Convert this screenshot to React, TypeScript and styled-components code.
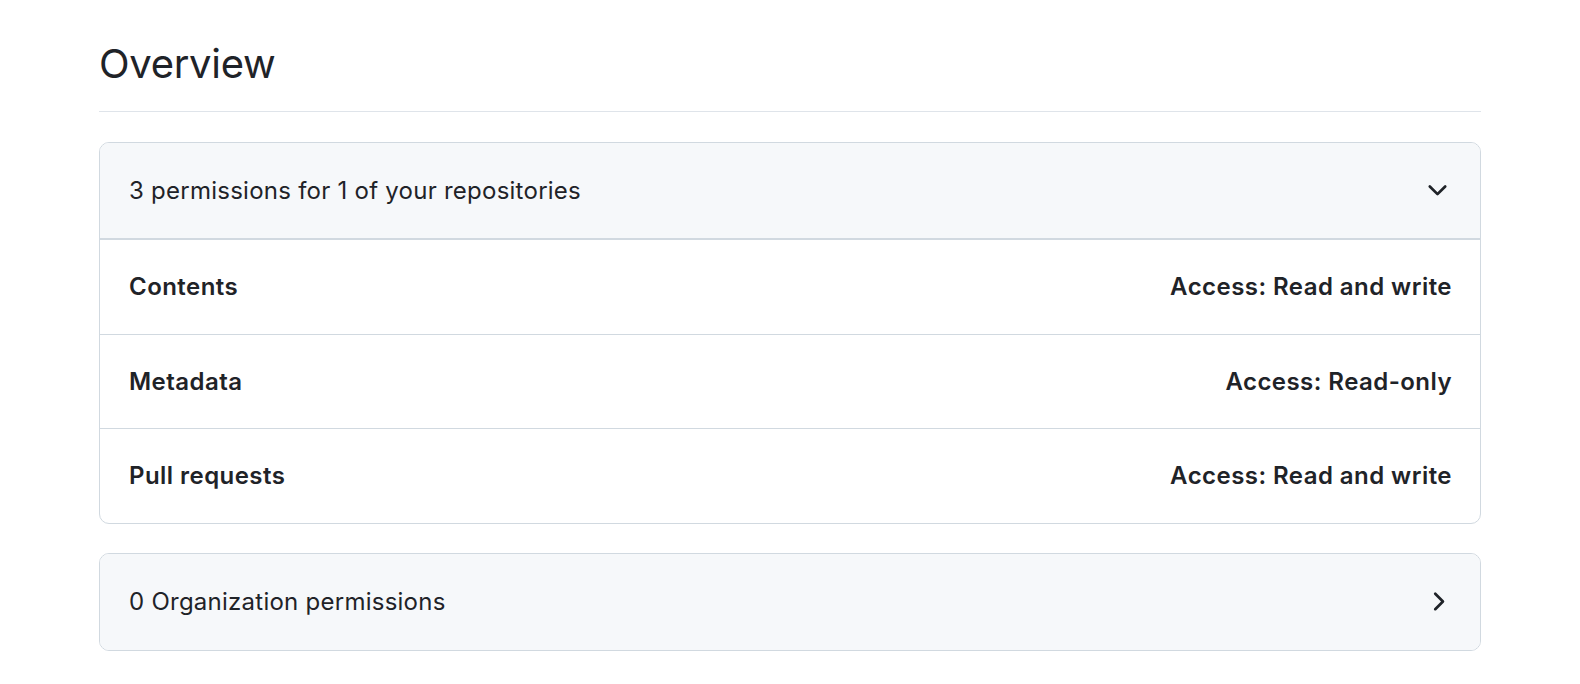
import React from "react";
import styled, { createGlobalStyle } from "styled-components";

const Global = createGlobalStyle`
  html, body { margin: 0; padding: 0; background: #ffffff; }
  body {
    font-family: Inter, "Noto Sans", "Liberation Sans", sans-serif;
    color: #1f2328;
    -webkit-font-smoothing: antialiased;
  }
`;

const Page = styled.main`
  width: 1382px;
  margin: 0 auto;
  padding-top: 36px;
  display: flex;
  flex-direction: column;
`;

const Subhead = styled.div`
  border-bottom: 1px solid #dfe4ea;
  padding-bottom: 19px;
  margin-bottom: 30px;
`;

const Heading = styled.h2`
  margin: 0;
  font-size: 40px;
  font-weight: 400;
  line-height: 56px;
  letter-spacing: -0.3px;
  color: #1f2328;
`;

const Box = styled.section<{ $spaced?: boolean }>`
  border: 1px solid #d1d9e0;
  border-radius: 10px;
  overflow: hidden;
  margin-bottom: ${(p) => (p.$spaced ? "29px" : "0")};
`;

const BoxHeader = styled.div<{ $open?: boolean }>`
  display: flex;
  align-items: center;
  justify-content: space-between;
  background: #f6f8fa;
  padding: 0 28px 0 29px;
  height: ${(p) => (p.$open ? "95px" : "96px")};
  border-bottom: ${(p) => (p.$open ? "1px solid #d1d9e0" : "none")};
  font-size: 24px;
  letter-spacing: 0.25px;
  color: #1f2328;
`;

const Row = styled.div`
  display: flex;
  align-items: center;
  justify-content: space-between;
  height: 93.5px;
  padding: 0 28px 0 29px;
  border-top: 1px solid #d1d9e0;
  font-size: 24px;
  font-weight: 600;
  letter-spacing: 0.45px;
  color: #1f2328;
`;

const Icon = styled.svg`
  width: 29px;
  height: 29px;
  fill: #1f2328;
  flex: none;
`;

const ChevronDown = () => (
  <Icon viewBox="0 0 16 16" aria-hidden="true">
    <path d="M12.78 5.22a.749.749 0 0 1 0 1.06l-4.25 4.25a.749.749 0 0 1-1.06 0L3.22 6.28a.749.749 0 1 1 1.06-1.06L8 8.939l3.72-3.719a.749.749 0 0 1 1.06 0Z" />
  </Icon>
);

const ChevronRight = () => (
  <Icon viewBox="0 0 16 16" aria-hidden="true">
    <path d="M6.22 3.22a.75.75 0 0 1 1.06 0l4.25 4.25a.75.75 0 0 1 0 1.06l-4.25 4.25a.751.751 0 0 1-1.042-.018.751.751 0 0 1-.018-1.042L9.94 8 6.22 4.28a.75.75 0 0 1 0-1.06Z" />
  </Icon>
);

const permissions = [
  { name: "Contents", access: "Read and write" },
  { name: "Metadata", access: "Read-only" },
  { name: "Pull requests", access: "Read and write" },
];

export default function App() {
  return (
    <>
      <Global />
      <Page>
        <Subhead>
          <Heading>Overview</Heading>
        </Subhead>
        <Box $spaced>
          <BoxHeader $open>
            <span>3 permissions for 1 of your repositories</span>
            <ChevronDown />
          </BoxHeader>
          {permissions.map((p) => (
            <Row key={p.name}>
              <span>{p.name}</span>
              <span>Access: {p.access}</span>
            </Row>
          ))}
        </Box>
        <Box>
          <BoxHeader>
            <span>0 Organization permissions</span>
            <ChevronRight />
          </BoxHeader>
        </Box>
      </Page>
    </>
  );
}
